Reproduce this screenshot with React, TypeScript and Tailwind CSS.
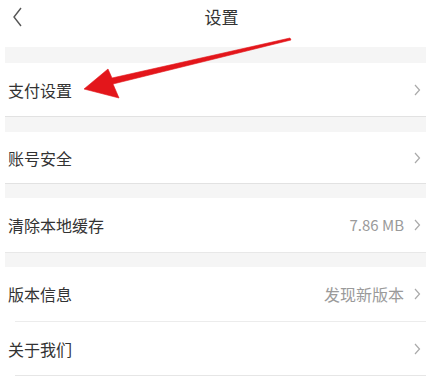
import React from 'react';

const font = { fontFamily: '"Noto Sans CJK SC", "Noto Sans", sans-serif' };

function Chevron() {
  return (
    <svg width="7" height="12" viewBox="0 0 7 12" className="shrink-0">
      <polyline points="1,1 5.5,6 1,11" fill="none" stroke="#aaaaaa" strokeWidth="1.2" />
    </svg>
  );
}

function Row({
  label,
  value,
  valueSize = 'text-[15px]',
  height,
  className = '',
}: {
  label: string;
  value?: string;
  valueSize?: string;
  height: string;
  className?: string;
}) {
  return (
    <div className={`flex items-center justify-between pl-[3px] pr-[5px] bg-white ${height} ${className}`}>
      <span className="text-[16px] text-[#333333]">{label}</span>
      <div className="flex items-center gap-[10px]">
        {value && <span className={`${valueSize} text-[#9a9a9a]`}>{value}</span>}
        <Chevron />
      </div>
    </div>
  );
}

function Band({ height }: { height: string }) {
  return <div className={`bg-[#f5f5f5] ${height}`} />;
}

export default function App() {
  return (
    <div className="relative w-[443px] h-[379px] bg-white overflow-hidden" style={font}>
      <div className="h-[47px] flex items-start pt-[4px] relative">
        <svg width="12" height="20" viewBox="0 0 12 20" className="absolute left-[12px] top-[7px]">
          <polyline points="9,1 2,10 9,19" fill="none" stroke="#555555" strokeWidth="1.4" />
        </svg>
        <div className="w-full text-center text-[17px] text-[#333333] leading-[26px]">设置</div>
      </div>
      <div className="ml-[5px] w-[421px]">
        <Band height="h-[16px]" />
        <Row label="支付设置" height="h-[54px]" className="border-b border-[#e2e2e2]" />
        <Band height="h-[15px]" />
        <Row label="账号安全" height="h-[52px]" className="border-b border-[#e2e2e2]" />
        <Band height="h-[14px]" />
        <Row label="清除本地缓存" value="7.86 MB" height="h-[55px]" className="border-b border-[#e8e8e8]" />
        <Band height="h-[14px]" />
        <div className="bg-white">
          <Row label="版本信息" value="发现新版本" valueSize="text-[16px]" height="h-[54px]" />
          <div className="ml-[10px] h-px bg-[#ececec]" />
          <Row label="关于我们" height="h-[53px]" />
          <div className="ml-[10px] h-px bg-[#e6e6e6]" />
        </div>
      </div>
      <svg width="443" height="379" viewBox="0 0 443 379" className="absolute left-0 top-0 pointer-events-none">
        <polygon
          points="84,89 119,98 113,84 291,40 290,38 112,78 108,69"
          fill="#e3161b"
          stroke="#e3161b"
          strokeWidth="0.6"
          strokeLinejoin="round"
        />
      </svg>
    </div>
  );
}
